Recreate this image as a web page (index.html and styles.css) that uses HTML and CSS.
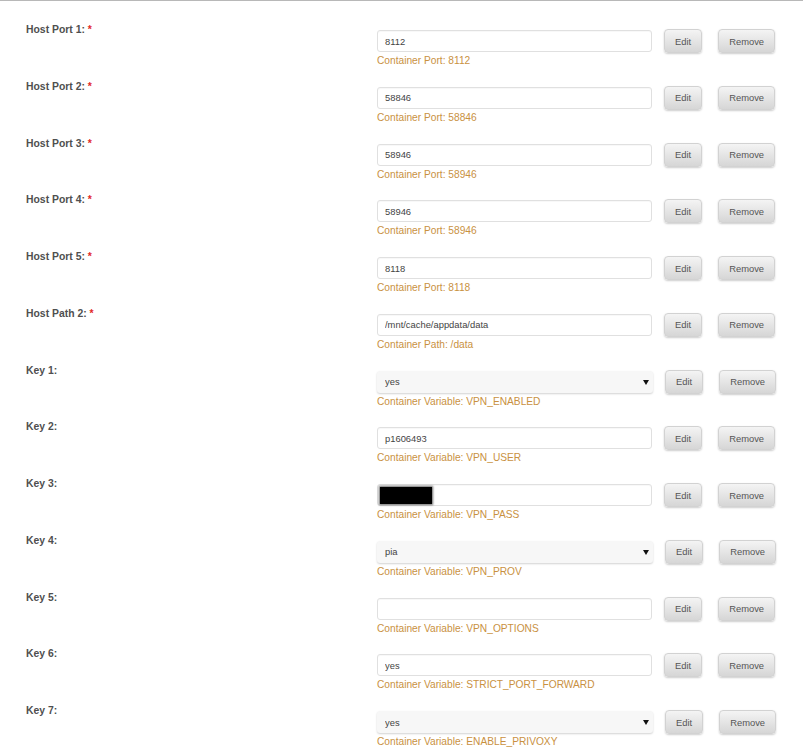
FILE: index.html
```html
<!DOCTYPE html>
<html lang="en">
<head>
  <meta charset="UTF-8">
  <meta name="viewport" content="width=device-width, initial-scale=1.0">
  <title>Docker Container Settings</title>
  <link rel="stylesheet" href="styles.css">
</head>
<body>
  <div class="settings">

    <div class="row">
      <div class="label">Host Port 1: <span class="req">*</span></div>
      <div class="field">
        <div class="line">
          <input class="text" type="text" value="8112">
          <button class="btn">Edit</button>
          <button class="btn">Remove</button>
        </div>
        <div class="desc">Container Port: 8112</div>
      </div>
    </div>

    <div class="row">
      <div class="label">Host Port 2: <span class="req">*</span></div>
      <div class="field">
        <div class="line">
          <input class="text" type="text" value="58846">
          <button class="btn">Edit</button>
          <button class="btn">Remove</button>
        </div>
        <div class="desc">Container Port: 58846</div>
      </div>
    </div>

    <div class="row">
      <div class="label">Host Port 3: <span class="req">*</span></div>
      <div class="field">
        <div class="line">
          <input class="text" type="text" value="58946">
          <button class="btn">Edit</button>
          <button class="btn">Remove</button>
        </div>
        <div class="desc">Container Port: 58946</div>
      </div>
    </div>

    <div class="row">
      <div class="label">Host Port 4: <span class="req">*</span></div>
      <div class="field">
        <div class="line">
          <input class="text" type="text" value="58946">
          <button class="btn">Edit</button>
          <button class="btn">Remove</button>
        </div>
        <div class="desc">Container Port: 58946</div>
      </div>
    </div>

    <div class="row">
      <div class="label">Host Port 5: <span class="req">*</span></div>
      <div class="field">
        <div class="line">
          <input class="text" type="text" value="8118">
          <button class="btn">Edit</button>
          <button class="btn">Remove</button>
        </div>
        <div class="desc">Container Port: 8118</div>
      </div>
    </div>

    <div class="row">
      <div class="label">Host Path 2: <span class="req">*</span></div>
      <div class="field">
        <div class="line">
          <input class="text" type="text" value="/mnt/cache/appdata/data">
          <button class="btn">Edit</button>
          <button class="btn">Remove</button>
        </div>
        <div class="desc">Container Path: /data</div>
      </div>
    </div>

    <div class="row">
      <div class="label">Key 1:</div>
      <div class="field">
        <div class="line">
          <span class="dropdown">
            <select>
              <option>yes</option>
              <option>no</option>
            </select>
          </span>
          <button class="btn">Edit</button>
          <button class="btn">Remove</button>
        </div>
        <div class="desc">Container Variable: VPN_ENABLED</div>
      </div>
    </div>

    <div class="row">
      <div class="label">Key 2:</div>
      <div class="field">
        <div class="line">
          <input class="text" type="text" value="p1606493">
          <button class="btn">Edit</button>
          <button class="btn">Remove</button>
        </div>
        <div class="desc">Container Variable: VPN_USER</div>
      </div>
    </div>

    <div class="row">
      <div class="label">Key 3:</div>
      <div class="field">
        <div class="line">
          <span class="secret">
            <input class="text" type="text" value="">
            <span class="redact"></span>
          </span>
          <button class="btn">Edit</button>
          <button class="btn">Remove</button>
        </div>
        <div class="desc">Container Variable: VPN_PASS</div>
      </div>
    </div>

    <div class="row">
      <div class="label">Key 4:</div>
      <div class="field">
        <div class="line">
          <span class="dropdown">
            <select>
              <option>pia</option>
              <option>airvpn</option>
              <option>custom</option>
            </select>
          </span>
          <button class="btn">Edit</button>
          <button class="btn">Remove</button>
        </div>
        <div class="desc">Container Variable: VPN_PROV</div>
      </div>
    </div>

    <div class="row">
      <div class="label">Key 5:</div>
      <div class="field">
        <div class="line">
          <input class="text" type="text" value="">
          <button class="btn">Edit</button>
          <button class="btn">Remove</button>
        </div>
        <div class="desc">Container Variable: VPN_OPTIONS</div>
      </div>
    </div>

    <div class="row">
      <div class="label">Key 6:</div>
      <div class="field">
        <div class="line">
          <input class="text" type="text" value="yes">
          <button class="btn">Edit</button>
          <button class="btn">Remove</button>
        </div>
        <div class="desc">Container Variable: STRICT_PORT_FORWARD</div>
      </div>
    </div>

    <div class="row">
      <div class="label">Key 7:</div>
      <div class="field">
        <div class="line">
          <span class="dropdown">
            <select>
              <option>yes</option>
              <option>no</option>
            </select>
          </span>
          <button class="btn">Edit</button>
          <button class="btn">Remove</button>
        </div>
        <div class="desc">Container Variable: ENABLE_PRIVOXY</div>
      </div>
    </div>

  </div>
</body>
</html>
```

FILE: styles.css
```css
body { margin: 0; background: #fff; border-top: 1px solid #b8b8b8; font-family: "Liberation Sans", Arial, sans-serif; overflow: hidden; }
.settings { padding-top: 22px; }

.row { display: flex; height: 56.75px; }
.label { width: 377px; flex: none; padding-left: 26px; box-sizing: border-box; font-size: 10.4px; line-height: 12px; font-weight: bold; color: #4f4f4f; padding-top: 1px; }
.req { color: #e22828; }

.field { display: flex; flex-direction: column; padding-top: 7px; }
.line { display: flex; align-items: center; height: 22px; }

.text { width: 275px; height: 22px; box-sizing: border-box; margin: 0; padding: 0 7px; border: 1px solid #e0e0e0; border-radius: 3px; background: #fff; font-family: inherit; font-size: 9.4px; color: #444; box-shadow: inset 0 1px 1px rgba(0,0,0,0.03); outline: none; }

.dropdown { position: relative; display: block; width: 276px; height: 22px; }
.dropdown select { appearance: none; -webkit-appearance: none; width: 100%; height: 22px; margin: 0; padding: 0 8px; border: none; border-radius: 3px; background: #f7f7f7; box-shadow: 0 1px 2px rgba(0,0,0,0.18); font-family: inherit; font-size: 9.4px; color: #444; outline: none; }
.dropdown::after { content: ""; position: absolute; right: 4px; top: 9px; border-left: 3px solid transparent; border-right: 3px solid transparent; border-top: 5px solid #111; pointer-events: none; }

.secret { position: relative; display: block; height: 22px; }
.redact { position: absolute; left: 3px; top: 3px; width: 52px; height: 17px; background: #000; box-shadow: 0 0 2px 1px rgba(0,0,0,0.6); }

.btn { height: 24px; margin: 0 0 0 12px; padding: 0 10px; border: 1px solid #d2d2d2; border-radius: 4px; background: linear-gradient(#f4f4f4, #d6d6d6); box-shadow: 0 1px 2px rgba(0,0,0,0.2); font-family: inherit; font-size: 9.4px; color: #555; cursor: pointer; }
.btn + .btn { margin-left: 16px; }

.desc { margin-top: 3px; font-size: 10.2px; line-height: 12px; color: #c9913f; }
```
